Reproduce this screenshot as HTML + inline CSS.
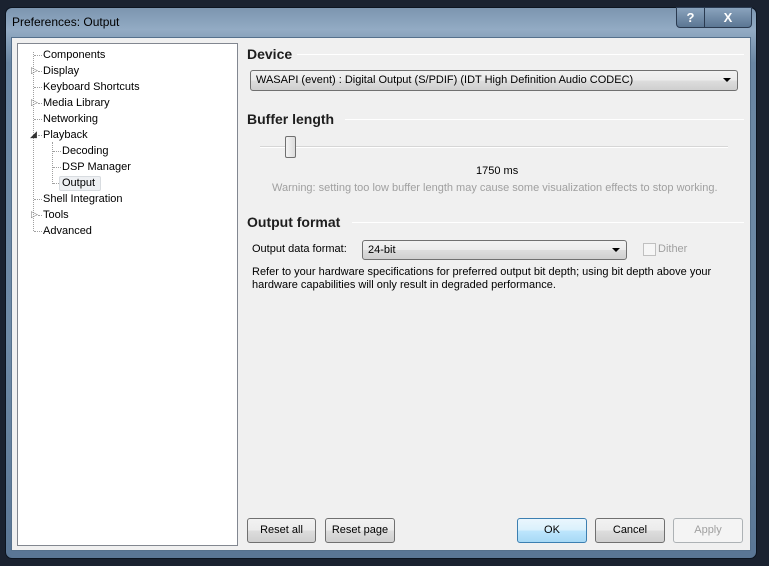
<!DOCTYPE html>
<html><head><style>
*{margin:0;padding:0;box-sizing:border-box}
body{width:769px;height:566px;overflow:hidden;background:#1a2230;font-family:"Liberation Sans",sans-serif;font-size:11px;color:#000;position:relative}
.a{position:absolute}
.frame{left:5px;top:7px;width:752px;height:552px;border:1px solid #0c1420;border-radius:7px;background:linear-gradient(180deg,#7c95b0 0%,#93abc4 4%,#6a86a3 10%,#6e8aa6 60%,#5a7695 100%)}
.client{left:11px;top:37px;width:740px;height:514px;background:#f0f0f0;border:1px solid #55708c}
.tree{left:17px;top:43px;width:221px;height:503px;background:#fff;border:1px solid #828790}
.t{position:absolute;white-space:nowrap}
.hd{font-weight:bold;font-size:14px;color:#1e1e1e}
.line{height:1px;background:#c8c8c8;border-bottom:1px solid #fff}
.btn{position:absolute;height:25px;border:1px solid #707070;border-radius:3px;background:linear-gradient(#f2f2f2,#ebebeb 50%,#dddddd 51%,#cfcfcf);text-align:center;line-height:23px}
.combo{position:absolute;border:1px solid #707070;border-radius:3px;background:linear-gradient(#f2f2f2,#ebebeb 50%,#dddddd 51%,#cfcfcf);padding-left:5px;line-height:19px}
.arr{position:absolute;right:6px;top:7px;width:0;height:0;border-left:4px solid transparent;border-right:4px solid transparent;border-top:4px solid #000}
.dot{position:absolute;border-top:1px dotted #a0a0a0}
.vdot{position:absolute;border-left:1px dotted #a0a0a0}
</style></head><body>
<div class="a frame"></div>
<div class="t" style="left:12px;top:15px;font-size:12px;color:#000">Preferences: Output</div>
<div class="a" style="left:676px;top:7px;width:29px;height:21px;border:1px solid #2a3a50;border-radius:0 0 0 4px;background:linear-gradient(#8aa3bd,#5b7693);color:#fff;font-weight:bold;text-align:center;line-height:19px;font-size:13px">?</div>
<div class="a" style="left:704px;top:7px;width:48px;height:21px;border:1px solid #2a3a50;border-radius:0 0 4px 0;background:linear-gradient(#8aa3bd,#5b7693);color:#fff;font-weight:bold;text-align:center;line-height:19px;font-size:13px">X</div>
<div class="a client"></div>
<div class="a tree"></div>
<div class="vdot" style="left:33px;top:52px;height:179px"></div>
<div class="vdot" style="left:52px;top:142px;height:42px"></div>
<div class="dot" style="left:34px;top:55px;width:8px"></div>
<div class="dot" style="left:38px;top:71px;width:4px"></div>
<div class="dot" style="left:34px;top:87px;width:8px"></div>
<div class="dot" style="left:38px;top:103px;width:4px"></div>
<div class="dot" style="left:34px;top:119px;width:8px"></div>
<div class="dot" style="left:38px;top:135px;width:4px"></div>
<div class="dot" style="left:53px;top:151px;width:8px"></div>
<div class="dot" style="left:53px;top:167px;width:8px"></div>
<div class="dot" style="left:53px;top:183px;width:6px"></div>
<div class="dot" style="left:34px;top:199px;width:8px"></div>
<div class="dot" style="left:38px;top:215px;width:4px"></div>
<div class="dot" style="left:34px;top:231px;width:8px"></div>
<div class="t" style="left:31px;top:65px;color:#777;font-size:9px">▷</div>
<div class="t" style="left:31px;top:97px;color:#777;font-size:9px">▷</div>
<div class="t" style="left:30px;top:129px;color:#333;font-size:9px">◢</div>
<div class="t" style="left:31px;top:209px;color:#777;font-size:9px">▷</div>
<div class="t" style="left:43px;top:49px">Components</div>
<div class="t" style="left:43px;top:65px">Display</div>
<div class="t" style="left:43px;top:81px">Keyboard Shortcuts</div>
<div class="t" style="left:43px;top:97px">Media Library</div>
<div class="t" style="left:43px;top:113px">Networking</div>
<div class="t" style="left:43px;top:129px">Playback</div>
<div class="t" style="left:62px;top:145px">Decoding</div>
<div class="t" style="left:62px;top:161px">DSP Manager</div>
<div class="a" style="left:59px;top:176px;width:42px;height:15px;background:#eef0f3;border:1px solid #d8dce0;border-radius:2px"></div>
<div class="t" style="left:62px;top:177px">Output</div>
<div class="t" style="left:43px;top:193px">Shell Integration</div>
<div class="t" style="left:43px;top:209px">Tools</div>
<div class="t" style="left:43px;top:225px">Advanced</div>
<div class="t hd" style="left:247px;top:46px">Device</div>
<div class="a line" style="left:297px;top:54px;width:447px"></div>
<div class="combo" style="left:250px;top:70px;width:488px;height:21px">WASAPI (event) : Digital Output (S/PDIF) (IDT High Definition Audio CODEC)<div class="arr"></div></div>
<div class="t hd" style="left:247px;top:111px">Buffer length</div>
<div class="a line" style="left:345px;top:119px;width:399px"></div>
<div class="a" style="left:260px;top:146px;width:468px;height:2px;background:#d6d6d6;border-bottom:1px solid #fff"></div>
<div class="a" style="left:285px;top:136px;width:11px;height:22px;border:1px solid #707070;border-radius:2px;background:linear-gradient(90deg,#f4f4f4,#dcdcdc)"></div>
<div class="t" style="left:476px;top:165px">1750 ms</div>
<div class="t" style="left:272px;top:182px;color:#a0a0a0">Warning: setting too low buffer length may cause some visualization effects to stop working.</div>
<div class="t hd" style="left:247px;top:214px">Output format</div>
<div class="a line" style="left:352px;top:222px;width:392px"></div>
<div class="t" style="left:252px;top:243px">Output data format:</div>
<div class="combo" style="left:362px;top:240px;width:265px;height:20px;line-height:18px">24-bit<div class="arr"></div></div>
<div class="a" style="left:643px;top:243px;width:13px;height:13px;border:1px solid #c0c0c0;background:#f6f6f6"></div>
<div class="t" style="left:658px;top:243px;color:#a0a0a0">Dither</div>
<div class="t" style="left:252px;top:266px;line-height:13px">Refer to your hardware specifications for preferred output bit depth; using bit depth above your<br>hardware capabilities will only result in degraded performance.</div>
<div class="btn" style="left:247px;top:518px;width:69px">Reset all</div>
<div class="btn" style="left:325px;top:518px;width:70px">Reset page</div>
<div class="btn" style="left:517px;top:518px;width:70px;border-color:#3c7fb1;background:linear-gradient(#eaf6fd,#d9f0fc 50%,#bee6fd 51%,#a7d9f5)">OK</div>
<div class="btn" style="left:595px;top:518px;width:70px">Cancel</div>
<div class="btn" style="left:673px;top:518px;width:70px;border-color:#adb2b5;background:#f4f4f4;color:#a0a0a0">Apply</div>
</body></html>
